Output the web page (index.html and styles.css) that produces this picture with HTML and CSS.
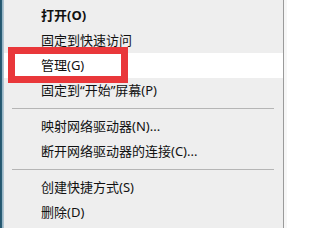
FILE: index.html
```html
<!DOCTYPE html>
<html lang="zh-CN">
<head>
<meta charset="utf-8">
<title>右键菜单</title>
<link rel="stylesheet" href="styles.css">
</head>
<body>
<div class="screen">
  <div class="desk-edge"></div>
  <div class="menu">
    <div class="item bold">打开(O)</div>
    <div class="item">固定到快速访问</div>
    <div class="item hover">管理(G)</div>
    <div class="item">固定到“开始”屏幕(P)</div>
    <div class="sep"></div>
    <div class="item">映射网络驱动器(N)...</div>
    <div class="item">断开网络驱动器的连接(C)...</div>
    <div class="sep"></div>
    <div class="item">创建快捷方式(S)</div>
    <div class="item">删除(D)</div>
    <div class="item">重命名(M)</div>
  </div>
  <div class="shadow"></div>
  <div class="mark"></div>
</div>
</body>
</html>
```
FILE: styles.css
```css
html, body {
  margin: 0;
  padding: 0;
  background: #ffffff;
}
.screen {
  position: relative;
  width: 287px;
  height: 228px;
  overflow: hidden;
  display: flex;
  font-family: "Noto Sans", "Noto Sans CJK SC", sans-serif;
  font-size: 13px;
  color: #111111;
}
.desk-edge {
  width: 4px;
  flex: none;
  background: linear-gradient(to right, #23536b 0, #2b6078 2px, #8eaec0 2px, #b9cbd6 4px);
}
.menu {
  width: 279px;
  flex: none;
  background: #eeeeee;
  border-right: 1px solid #9a9a9a;
  padding-top: 3px;
}
.item {
  height: 25px;
  line-height: 25px;
  padding-left: 37px;
  white-space: nowrap;
}
.bold {
  font-weight: 700;
}
.hover {
  background: #ffffff;
}
.sep {
  height: 1px;
  margin: 5px 9px 5px 8px;
  background: #b5b5b5;
}
.shadow {
  flex: 1;
  background: #f6f6f6;
}
.mark {
  position: absolute;
  left: 8px;
  top: 47px;
  width: 106px;
  height: 22px;
  border: 7px solid #e9373a;
}
```
